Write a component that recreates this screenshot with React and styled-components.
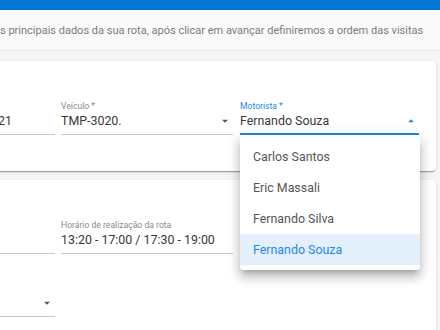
import React from "react";
import styled, { createGlobalStyle } from "styled-components";

const Global = createGlobalStyle`
  html, body { margin: 0; padding: 0; }
  body {
    width: 440px; height: 330px; overflow: hidden;
    background: #f5f5f5;
    font-family: Roboto, "Liberation Sans", Arial, sans-serif;
  }
`;

const Page = styled.div`
  width: 440px;
  height: 330px;
  overflow: hidden;
  display: flex;
  flex-direction: column;
`;

const TopBar = styled.div`
  height: 10px;
  background: #0276d3;
  flex: none;
`;

const Intro = styled.div`
  height: 40px;
  flex: none;
  background: #fafafa;
  border-bottom: 1px solid #ececec;
  display: flex;
  align-items: center;
  font-size: 11px;
  color: #7a7a7a;
  white-space: nowrap;
`;

const Content = styled.div`
  padding-top: 10px;
  display: flex;
  flex-direction: column;
  gap: 9px;
`;

const Card = styled.div`
  flex: none;
  background: #fff;
  margin-left: -150px;
  margin-right: 4px;
  padding: 40px 0 0 96px;
  border-radius: 4px;
  box-shadow: 0 2px 1px -1px rgba(0,0,0,.2), 0 1px 1px 0 rgba(0,0,0,.14), 0 1px 3px 0 rgba(0,0,0,.12);
  height: ${(p) => p.$h};
  box-sizing: border-box;
  display: flex;
  flex-direction: column;
  gap: 29px;
`;

const Row = styled.div`
  display: grid;
  grid-template-columns: 109px 172px 180px;
  column-gap: 6px;
  & > :nth-child(3) { margin-left: 1px; }
`;

const Field = styled.div`
  position: relative;
  display: flex;
  flex-direction: column;
`;

const Label = styled.div`
  font-size: 8.6px;
  line-height: 11px;
  height: 11px;
  white-space: nowrap;
  color: ${(p) => (p.$active ? "#1e88e5" : "#8a8a8a")};
`;

const Input = styled.div`
  position: relative;
  font-size: 12.4px;
  line-height: 15px;
  height: 15px;
  padding: 1px 0 ${(p) => (p.$active ? "5px" : "6px")};
  color: #383838;
  border-bottom: ${(p) => (p.$active ? "2px solid #1e88e5" : "1px solid #c8c8c8")};
  display: flex;
  align-items: center;
  white-space: nowrap;
`;

const Arrow = styled.svg`
  position: absolute;
  right: 1px;
  top: 2px;
  width: 14px;
  height: 14px;
  fill: ${(p) => (p.$active ? "#1e88e5" : "#555")};
`;

const Menu = styled.ul`
  position: absolute;
  top: 100%;
  left: 0;
  width: 180px;
  margin: 0;
  padding: 6px 0 5px;
  list-style: none;
  background: #fff;
  border-radius: 3px;
  box-shadow: 0 5px 5px -3px rgba(0,0,0,.2), 0 8px 10px 1px rgba(0,0,0,.14), 0 3px 14px 2px rgba(0,0,0,.12);
  z-index: 5;
`;

const Item = styled.li`
  height: 31px;
  display: flex;
  align-items: center;
  padding-left: 13px;
  font-size: 12.4px;
  color: ${(p) => (p.$selected ? "#1e88e5" : "#555")};
  background: ${(p) => (p.$selected ? "#e3f0fb" : "transparent")};
`;

const DropIcon = ({ up, active }) => (
  <Arrow viewBox="0 0 24 24" $active={active}>
    <path d={up ? "M7 14l5-5 5 5z" : "M7 10l5 5 5-5z"} />
  </Arrow>
);

const drivers = ["Carlos Santos", "Eric Massali", "Fernando Silva", "Fernando Souza"];

export default function App() {
  return (
    <>
      <Global />
      <Page>
        <TopBar />
        <Intro>s principais dados da sua rota, após clicar em avançar definiremos a ordem das visitas</Intro>
        <Content>
          <Card $h="110px">
            <Row>
              <Field>
                <Label>Data *</Label>
                <Input>22/07/2021</Input>
              </Field>
              <Field>
                <Label>Veículo *</Label>
                <Input>
                  TMP-3020.
                  <DropIcon />
                </Input>
              </Field>
              <Field>
                <Label $active>Motorista *</Label>
                <Input $active>
                  Fernando Souza
                  <DropIcon up active />
                </Input>
                <Menu>
                  {drivers.map((d) => (
                    <Item key={d} $selected={d === "Fernando Souza"}>{d}</Item>
                  ))}
                </Menu>
              </Field>
            </Row>
          </Card>
          <Card $h="200px">
            <Row>
              <Field>
                <Label>Obs.</Label>
                <Input />
              </Field>
              <Field>
                <Label>Horário de realização da rota</Label>
                <Input>13:20 - 17:00 / 17:30 - 19:00</Input>
              </Field>
            </Row>
            <Row>
              <Field>
                <Label>Tipo</Label>
                <Input>
                  <DropIcon />
                </Input>
              </Field>
            </Row>
          </Card>
        </Content>
      </Page>
    </>
  );
}
